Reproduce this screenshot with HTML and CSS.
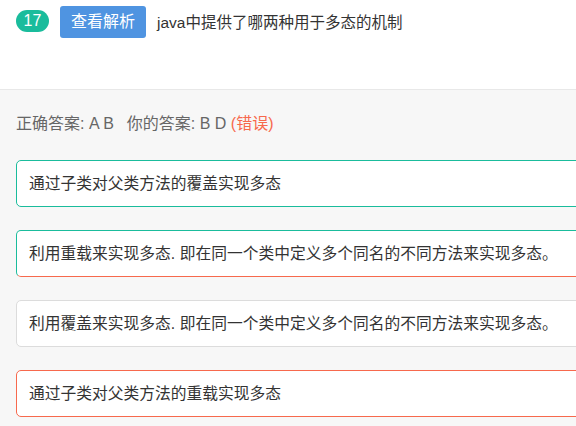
FILE: index.html
```html
<!DOCTYPE html>
<html lang="zh-CN">
<head>
<meta charset="utf-8">
<title>题目</title>
<link rel="stylesheet" href="styles.css">
</head>
<body>
<div class="page">
  <header class="head">
    <div class="head-row">
      <span class="badge">17</span>
      <button class="btn">查看解析</button>
      <span class="question">java中提供了哪两种用于多态的机制</span>
    </div>
  </header>
  <main class="body">
    <div class="answer">正确答案: A B<span class="mine">你的答案: B D</span> <span class="wrong">(错误)</span></div>
    <div class="options">
      <div class="option correct">通过子类对父类方法的覆盖实现多态</div>
      <div class="option both">利用重载来实现多态<span class="pt">.</span>即在同一个类中定义多个同名的不同方法来实现多态。</div>
      <div class="option">利用覆盖来实现多态<span class="pt">.</span>即在同一个类中定义多个同名的不同方法来实现多态。</div>
      <div class="option chosen">通过子类对父类方法的重载实现多态</div>
    </div>
  </main>
</div>
</body>
</html>
```

FILE: styles.css
```css
html, body {
  margin: 0;
  padding: 0;
  overflow: hidden;
  background: #f7f7f7;
}
body {
  font-family: "Liberation Sans", "Noto Sans CJK SC", sans-serif;
  font-size: 16px;
  color: #333;
}
.page {
  width: 576px;
  height: 426px;
  overflow: hidden;
}
.head {
  background: #fff;
  height: 89px;
  border-bottom: 1px solid #e8e8e8;
  box-sizing: content-box;
}
.head-row {
  display: flex;
  align-items: center;
  padding: 6px 0 0 16px;
  height: 32px;
}
.badge {
  display: inline-flex;
  align-items: center;
  justify-content: center;
  width: 33px;
  height: 22px;
  border-radius: 11px;
  background: #1abc9c;
  color: #fff;
  font-size: 16px;
  line-height: 1;
  margin-top: -3px;
}
.btn {
  margin-left: 11px;
  height: 32px;
  width: 86px;
  padding: 0;
  border: none;
  border-radius: 3px;
  background: #4f94e1;
  color: #fff;
  font-family: inherit;
  font-size: 16px;
  line-height: 32px;
}
.question {
  margin-left: 11px;
  margin-top: 2px;
  font-size: 15.5px;
  color: #333;
  line-height: 20px;
}
.body {
  padding: 24px 0 0 16px;
}
.answer {
  color: #666;
  font-size: 16px;
  line-height: 20px;
  height: 20px;
}
.mine {
  margin-left: 13px;
}
.wrong {
  color: #f7694d;
}
.options {
  display: flex;
  flex-direction: column;
  gap: 23px;
  margin-top: 26px;
}
.option {
  width: 640px;
  height: 47px;
  box-sizing: border-box;
  padding: 0 12px;
  line-height: 45px;
  font-size: 15.75px;
  background: #fff;
  border: 1px solid #dcdcdc;
  border-radius: 5px;
  color: #333;
  white-space: nowrap;
}
.pt {
  display: inline-block;
  width: 9px;
}
.option.correct {
  border-color: #1abc9c;
}
.option.both {
  border-color: #1abc9c;
  border-bottom-color: #f7694d;
}
.option.chosen {
  border-color: #f7694d;
}
```
